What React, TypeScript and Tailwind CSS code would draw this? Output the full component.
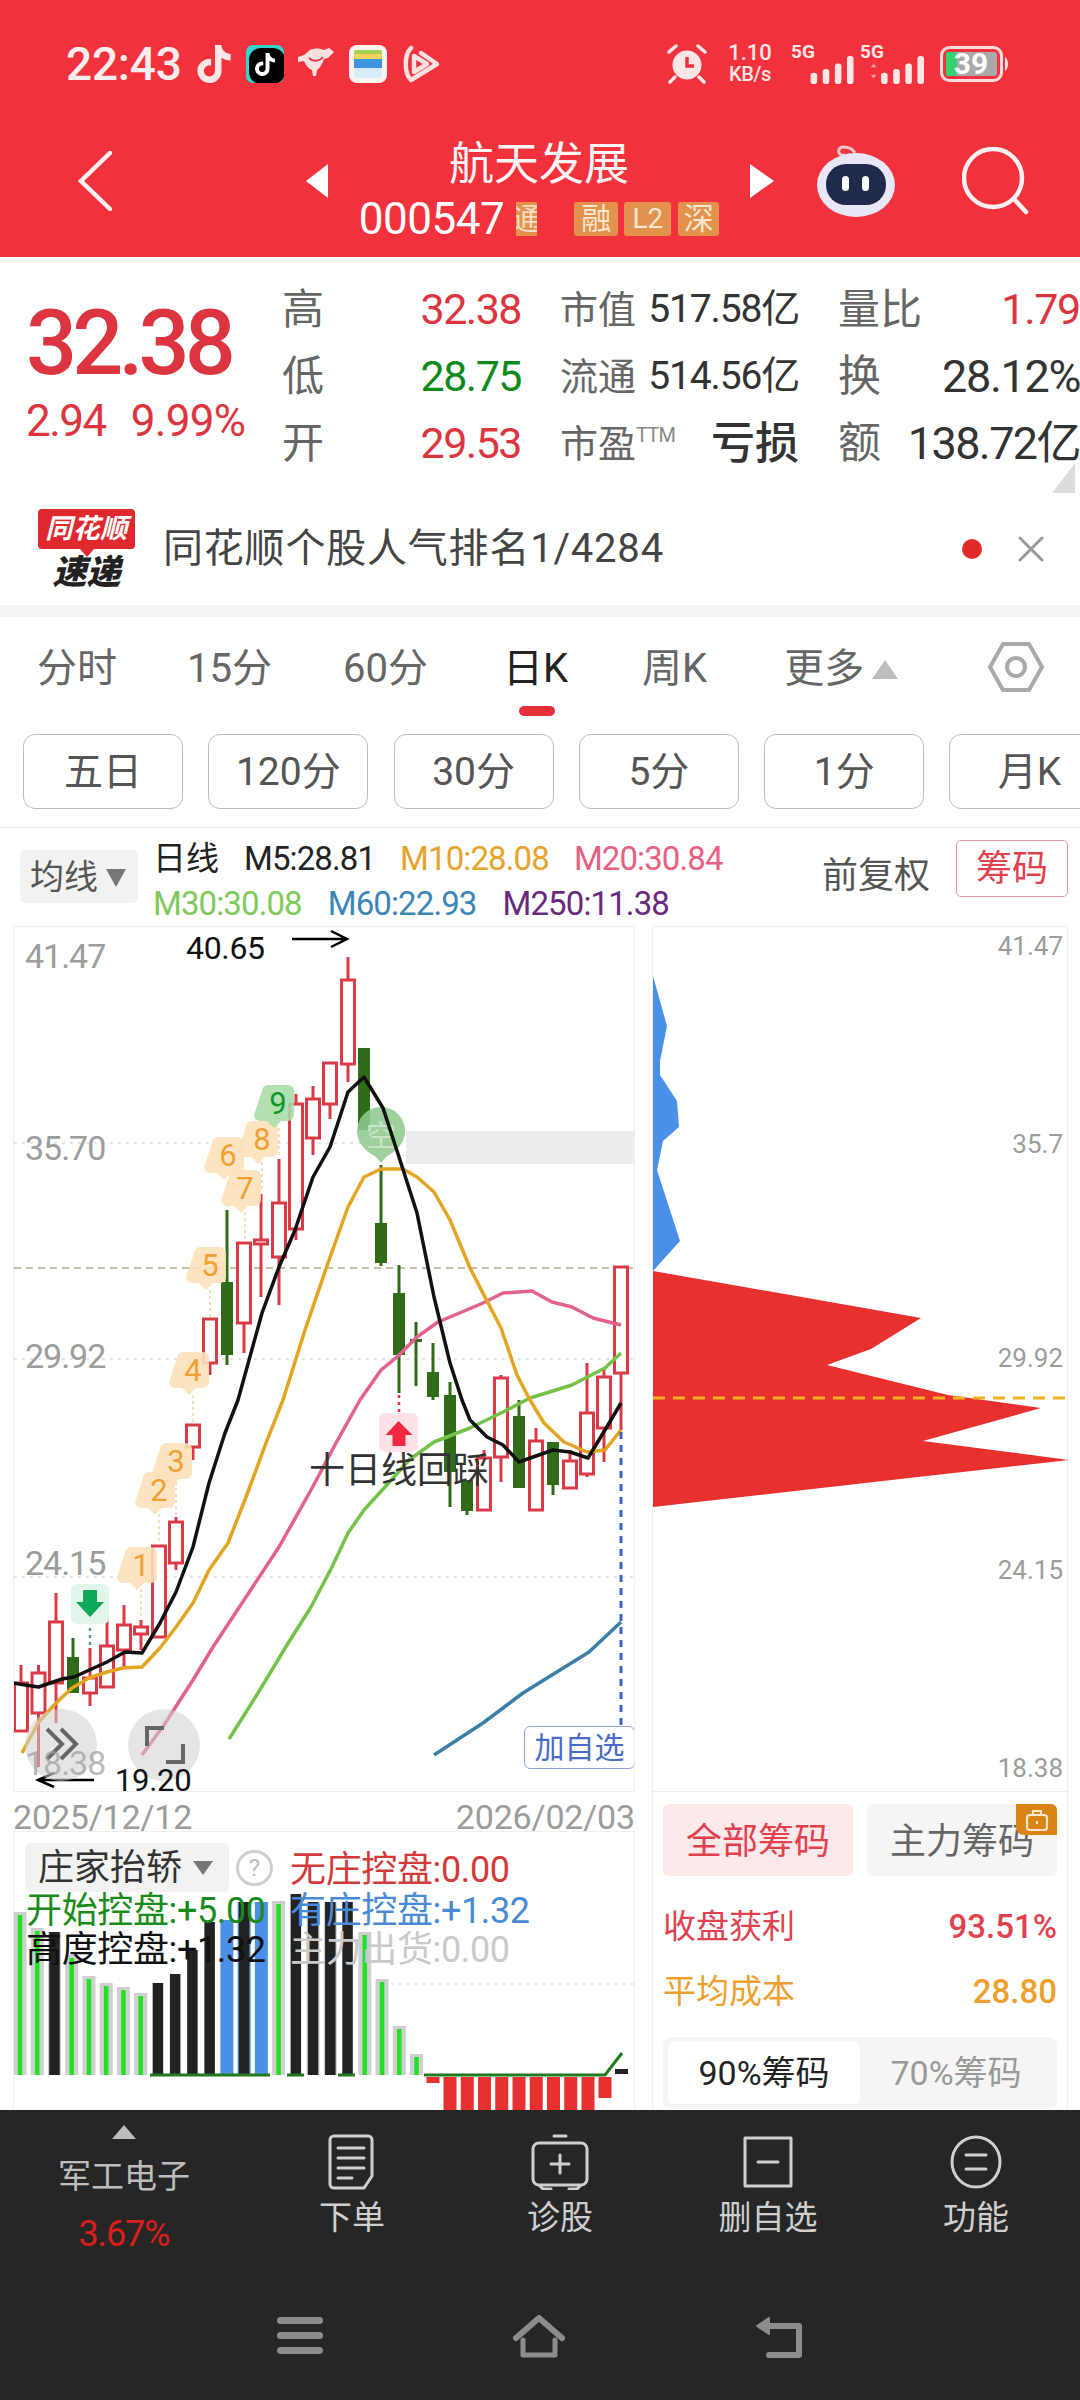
import React from "react";
import { FaTiktok } from "react-icons/fa6";

type C = [number, number, number, number, number, "r" | "g"];
const candles: C[] = [
  [20, 1683, 1731, 1665, 1731, "r"],
  [37.5, 1673, 1713, 1665, 1767, "r"],
  [55, 1622, 1683, 1593, 1723, "r"],
  [72, 1657, 1693, 1638, 1693, "g"],
  [89, 1678, 1693, 1648, 1706, "r"],
  [106, 1646, 1687, 1613, 1687, "r"],
  [123, 1625, 1650, 1605, 1668, "r"],
  [140, 1627, 1634, 1620, 1650, "r"],
  [158, 1546, 1637, 1546, 1637, "r"],
  [175, 1522, 1563, 1517, 1570, "r"],
  [192, 1425, 1447, 1425, 1460, "r"],
  [209, 1319, 1363, 1319, 1375, "r"],
  [226, 1282, 1355, 1210, 1365, "g"],
  [243, 1243, 1323, 1243, 1353, "r"],
  [260, 1240, 1244, 1194, 1297, "r"],
  [278, 1203, 1257, 1159, 1305, "r"],
  [295, 1104, 1229, 1094, 1240, "r"],
  [312, 1099, 1138, 1086, 1155, "r"],
  [329, 1063, 1104, 1063, 1119, "r"],
  [347, 980, 1064, 957, 1082, "r"],
  [363, 1048, 1130, 1048, 1130, "g"],
  [380, 1223, 1263, 1165, 1266, "g"],
  [398, 1293, 1355, 1265, 1393, "g"],
  [415, 1339, 1341, 1322, 1386, "g"],
  [432, 1372, 1397, 1343, 1400, "g"],
  [449, 1395, 1472, 1382, 1507, "g"],
  [466, 1480, 1511, 1480, 1515, "g"],
  [483, 1458, 1510, 1450, 1510, "r"],
  [500, 1378, 1457, 1375, 1482, "r"],
  [518, 1416, 1488, 1400, 1488, "g"],
  [535, 1441, 1510, 1428, 1510, "r"],
  [552, 1442, 1485, 1442, 1495, "g"],
  [569, 1461, 1488, 1450, 1488, "r"],
  [586, 1413, 1474, 1363, 1477, "r"],
  [603, 1377, 1428, 1368, 1462, "r"],
  [620, 1267, 1373, 1267, 1430, "r"],
];

const m5 = "12,1683 37.5,1687 61,1679 73,1677 106,1662 124,1652 141,1653 159,1623 175,1592 192,1547 208,1483 224,1433 237,1400 261,1313 278,1267 294,1230 312,1177 329,1147 347,1092 363,1077 382,1108 398,1157 416,1213 433,1297 449,1363 461,1400 469,1420 486,1437 502,1445 518,1462 535,1456 552,1450 569,1452 587,1458 604,1430 620,1403";
const m10 = "21,1753 37,1723 55,1703 71,1688 88,1678 106,1672 122,1668 141,1667 159,1648 175,1627 192,1603 208,1570 227,1543 245,1497 265,1443 282,1400 304,1330 327,1263 347,1207 363,1177 380,1169 402,1169 416,1177 433,1192 449,1220 469,1268 500,1328 516,1375 529,1400 543,1423 563,1442 586,1452 604,1450 620,1430";
const m20 = "141,1755 163,1725 192,1680 212,1647 245,1597 278,1547 310,1490 335,1443 359,1400 380,1370 396,1357 416,1337 437,1322 461,1312 482,1303 502,1293 531,1291 551,1302 571,1307 592,1318 620,1325";
const m30 = "228,1739 257,1693 286,1645 310,1607 331,1567 347,1533 363,1510 384,1487 408,1460 433,1442 469,1428 502,1412 529,1398 571,1385 604,1368 620,1353";
const m60 = "433,1755 482,1723 522,1693 588,1652 620,1622";

const badges: [number, number, string][] = [
  [192, 1352, "4"],
  [209, 1247, "5"],
  [227, 1137, "6"],
  [244, 1170, "7"],
  [261, 1121, "8"],
  [175, 1443, "3"],
  [158, 1472, "2"],
  [140, 1547, "1"],
];

const subBars: [string, number][] = [
  ["g", 1912], ["g", 1928], ["kg", 1932], ["g", 1955], ["g", 1976], ["g", 1983], ["g", 1987], ["g", 1993],
  ["k", 1983], ["k", 1974], ["k", 1950], ["k", 1922], ["b", 1920], ["kb", 1902], ["b", 1902], ["g", 1901],
  ["k", 1894], ["kg", 1902], ["kg", 1902], ["k", 1902], ["g", 1932], ["g", 1979], ["g", 2026], ["g", 2054],
];

function Badge({ cx, top, label, fill, color }: { cx: number; top: number; label: string; fill: string; color: string }) {
  return (
    <g>
      <path
        d={`M${cx - 16} ${top + 6}a6 6 0 0 1 6 -6h20a6 6 0 0 1 6 6v24a6 6 0 0 1 -6 6h-7l-7 7 -7 -7h-7a6 6 0 0 1 -6 -6z`}
        fill={fill}
        fillOpacity={0.88}
      />
      <text x={cx} y={top + 29} textAnchor="middle" fontSize={31} fill={color}>
        {label}
      </text>
    </g>
  );
}

function StatusBar() {
  return (
    <div className="flex items-center h-[42px] mt-[43px] pl-[66px] text-white">
      <span className="text-[46px] leading-[42px] tracking-[-0.005em] font-medium text-[#fdeeee]">22:43</span>
      <FaTiktok className="ml-[15px] w-[34px] h-[38px] text-[#fde6e6]" />
      <div className="relative ml-[15px] w-[38px] h-[38px] rounded-[7px] bg-[#35d5cf] overflow-hidden flex items-center justify-center">
        <div className="absolute left-[3px] top-[3px] w-[36px] h-[36px] rounded-[12px] bg-black" />
        <FaTiktok className="relative w-[20px] h-[23px] text-white" />
      </div>
      <svg className="ml-[13px]" width="38" height="36" viewBox="0 0 38 36" fill="#fde0e0">
        <path d="M1 11l6-2 6-5c4-2 10-2 14 0l5-2 5 4-6 6-4 1c-2 6-5 10-7 11l-1 6h-3l-1-6c-3-1-6-4-8-9l-6 1z" />
        <path d="M12 12c4 4 10 4 14-1" fill="none" stroke="#f1323d" strokeWidth="1.8" />
      </svg>
      <svg className="ml-[14px]" width="38" height="38" viewBox="0 0 38 38">
        <rect width="38" height="38" rx="8" fill="#fdf3f3" />
        <rect x="5" y="5" width="28" height="9" rx="2" fill="#a5cf55" />
        <rect x="5" y="9" width="28" height="5" fill="#efd25a" />
        <rect x="5" y="14" width="28" height="9" fill="#3f95e0" />
        <rect x="5" y="23" width="28" height="10" rx="2" fill="#d9ecfa" />
      </svg>
      <svg className="ml-[12px]" width="40" height="38" viewBox="0 0 40 38" fill="none" stroke="#fde0e0" strokeLinejoin="round" strokeLinecap="round">
        <path d="M12 3C5 10 5 28 12 35L38 19 22 8" strokeWidth="4.5" />
        <path d="M15 11v16l13-8z" strokeWidth="4.5" />
      </svg>
      <div className="ml-auto flex items-center pr-[68px]">
        <svg width="40" height="40" viewBox="0 0 40 40" fill="#fde6e6">
          <circle cx="20" cy="21" r="14.5" />
          <path d="M20 13v9h7" fill="none" stroke="#f1323d" strokeWidth="3.5" />
          <path d="M2 8l7-6M38 8l-7-6M8 33l-5 5M32 33l5 5" stroke="#fde6e6" strokeWidth="3.5" strokeLinecap="round" />
        </svg>
        <div className="ml-[20px] w-[46px] flex flex-col items-center text-[#fde6e6] font-medium">
          <span className="text-[22px] leading-[20px]">1.10</span>
          <span className="text-[20px] leading-[22px] tracking-[-0.02em]">KB/s</span>
        </div>
        <div className="ml-[18px] w-[66px] flex flex-col text-[#fde6e6]">
          <span className="text-[19px] leading-[16px] font-bold">5G</span>
          <svg className="mt-[-4px] self-end" width="48" height="28" viewBox="0 0 48 30" fill="#fde6e6">
            <rect x="0" y="18" width="7" height="12" rx="3" />
            <rect x="13" y="14" width="7" height="16" rx="3" />
            <rect x="26" y="8" width="7" height="22" rx="3" />
            <rect x="39" y="0" width="7" height="30" rx="3" />
          </svg>
        </div>
        <div className="ml-[3px] w-[66px] flex flex-col text-[#fde6e6]">
          <span className="text-[19px] leading-[16px] font-bold">5G</span>
          <svg className="mt-[-4px] self-end" width="60" height="28" viewBox="0 0 60 30" fill="#fde6e6">
            <path d="M3 12l3-4 3 4zM3 20h6l-3 4z" fill="#f9a0a0" />
            <rect x="14" y="18" width="7" height="12" rx="3" />
            <rect x="27" y="14" width="7" height="16" rx="3" />
            <rect x="40" y="8" width="7" height="22" rx="3" />
            <rect x="53" y="0" width="7" height="30" rx="3" />
          </svg>
        </div>
        <svg className="ml-[14px]" width="72" height="36" viewBox="0 0 72 36">
          <rect x="1.5" y="1.5" width="60" height="33" rx="8" fill="none" stroke="#fbdcdc" strokeWidth="3" />
          <rect x="6" y="6" width="51" height="24" rx="3" fill="#a9a9a9" />
          <rect x="6" y="6" width="11" height="24" rx="2" fill="#34d36f" />
          <path d="M65 11c4 2 4 12 0 14z" fill="#fbdcdc" />
          <text x="31" y="28" textAnchor="middle" fontSize="30" fontWeight="700" fill="#fff">39</text>
        </svg>
      </div>
    </div>
  );
}

function Header() {
  return (
    <header className="h-[257px] shrink-0 bg-[#f1323d] flex flex-col">
      <StatusBar />
      <div className="flex items-center mt-[50px] pl-[78px] h-[106px]">
        <svg className="mt-[-14px]" width="34" height="60" viewBox="0 0 34 60" fill="none" stroke="#fdf0f0" strokeWidth="4.5" strokeLinecap="round">
          <path d="M32 2L3 30l29 28" />
        </svg>
        <svg className="ml-[194px] mt-[-14px]" width="22" height="34" viewBox="0 0 22 34" fill="#fff"><path d="M22 0v34L0 17z" /></svg>
        <div className="w-[422px] flex flex-col items-center">
          <div className="text-[45px] leading-[52px] text-[#fff5f5]">航天发展</div>
          <div className="mt-[10px] flex items-center h-[36px]">
            <span className="text-[44px] leading-[36px] text-white tracking-[-0.01em]">000547</span>
            <span className="ml-[12px] w-[21px] h-[34px] bg-[#e2924c] text-[#f8dcc0] text-[30px] leading-[34px] overflow-hidden flex justify-center">通</span>
            <span className="ml-[37px] w-[44px] h-[34px] rounded-[3px] bg-[#e2924c] text-[#fbe6d0] text-[30px] leading-[34px] text-center">融</span>
            <span className="ml-[6px] w-[47px] h-[34px] rounded-[3px] bg-[#e2924c] text-[#fbe6d0] text-[28px] leading-[34px] text-center">L2</span>
            <span className="ml-[7px] w-[41px] h-[34px] rounded-[3px] bg-[#e2924c] text-[#fbe6d0] text-[30px] leading-[34px] text-center">深</span>
          </div>
        </div>
        <svg className="mt-[-14px]" width="24" height="34" viewBox="0 0 24 34" fill="#fff"><path d="M0 0v34l24-17z" /></svg>
        <svg className="ml-[41px] mt-[-14px]" width="82" height="76" viewBox="0 0 82 76">
          <path d="M30 12c-8 2-8-8-2-8s10 2 12 6" fill="none" stroke="#f3c5d0" strokeWidth="3" />
          <ellipse cx="41" cy="42" rx="39" ry="32" fill="#e9e6f7" />
          <rect x="11" y="21" width="60" height="41" rx="20" fill="#1f2a4d" />
          <rect x="27" y="33" width="7" height="15" rx="3.5" fill="#fff" />
          <rect x="47" y="33" width="7" height="15" rx="3.5" fill="#fff" />
        </svg>
        <svg className="ml-[65px] mt-[-14px]" width="68" height="68" viewBox="0 0 68 68" fill="none" stroke="#fdf0f0" strokeWidth="4.5" strokeLinecap="round">
          <circle cx="31" cy="31" r="29" />
          <path d="M52 52l12 13" />
        </svg>
      </div>
    </header>
  );
}

function QuoteCell({ label, value, color }: { label: string; value: string; color: string }) {
  return (
    <div className="flex items-center justify-between h-[67px]">
      <span className="text-[#666] text-[42px] leading-none">{label}</span>
      <span className={`text-[43px] leading-none tracking-[-0.035em] ${color}`}>{value}</span>
    </div>
  );
}

function Quote() {
  return (
    <section className="relative h-[236px] shrink-0 bg-white flex">
      <div className="w-[283px] pt-[42px] pl-[26px] text-[#dc3540]">
        <div className="text-[90px] leading-[90px] tracking-[-0.055em] font-medium">32.38</div>
        <div className="flex mt-[10px] text-[44px] leading-[44px] tracking-[-0.035em]">
          <span>2.94</span>
          <span className="ml-[25px] tracking-[-0.015em]">9.99%</span>
        </div>
      </div>
      <div className="pt-[19px] grid grid-cols-[239px_239px_242px] gap-x-[39px] h-[220px]">
        <QuoteCell label="高" value="32.38" color="text-[#dc3540]" />
        <div className="flex items-center justify-between h-[67px]">
          <span className="text-[#666] text-[38px] leading-none">市值</span>
          <span className="text-[39px] leading-none tracking-[-0.03em] text-[#333]">517.58亿</span>
        </div>
        <div className="flex items-center justify-between h-[67px]">
          <span className="text-[#666] text-[42px] leading-none">量比</span>
          <span className="text-[43px] leading-none tracking-[-0.03em] text-[#dc3540]">1.79</span>
        </div>
        <QuoteCell label="低" value="28.75" color="text-[#0e8a1c]" />
        <div className="flex items-center justify-between h-[67px]">
          <span className="text-[#666] text-[38px] leading-none">流通</span>
          <span className="text-[39px] leading-none tracking-[-0.03em] text-[#333]">514.56亿</span>
        </div>
        <div className="flex items-center justify-between h-[67px]">
          <span className="text-[#666] text-[43px] leading-none">换</span>
          <span className="text-[45px] leading-none tracking-[-0.03em] text-[#333]">28.12%</span>
        </div>
        <QuoteCell label="开" value="29.53" color="text-[#dc3540]" />
        <div className="flex items-center justify-between h-[67px]">
          <span className="flex items-start text-[#666] text-[38px] leading-none">
            市盈<span className="text-[20px] leading-[20px] text-[#888] tracking-[-0.04em]">TTM</span>
          </span>
          <span className="text-[44px] leading-none font-medium text-[#333]">亏损</span>
        </div>
        <div className="flex items-center justify-between h-[67px]">
          <span className="text-[#666] text-[43px] leading-none">额</span>
          <span className="text-[45px] leading-none tracking-[-0.035em] text-[#333]">138.72亿</span>
        </div>
      </div>
      <svg className="absolute right-[5px] bottom-[0px]" width="23" height="30" viewBox="0 0 23 30" fill="#dcdcdc"><path d="M23 0v30H0z" /></svg>
    </section>
  );
}

function Banner() {
  return (
    <section className="h-[112px] shrink-0 bg-white flex items-center">
      <div className="ml-[38px] w-[97px] h-[80px] flex flex-col items-center">
        <div className="relative w-[97px] h-[40px] rounded-[4px] bg-[#e0282f] text-white text-[27px] leading-[40px] font-bold italic tracking-[0.02em] text-center">
          同花顺
          <div className="absolute left-[42px] bottom-[-8px] w-0 h-0 border-x-[7px] border-x-transparent border-t-[8px] border-t-[#e0282f]" />
        </div>
        <div className="mt-[6px] text-[34px] leading-[34px] font-black italic text-[#222]">速递</div>
      </div>
      <div className="ml-[28px] text-[40px] leading-none text-[#444] tracking-[0.02em]">同花顺个股人气排名1/4284</div>
      <div className="ml-auto w-[20px] h-[20px] rounded-full bg-[#e32a2a]" />
      <svg className="ml-[36px] mr-[36px]" width="26" height="26" viewBox="0 0 26 26" stroke="#999" strokeWidth="3" strokeLinecap="round"><path d="M2 2l22 22M24 2L2 24" /></svg>
    </section>
  );
}

function Tabs() {
  return (
    <section className="h-[117px] shrink-0 bg-white relative flex items-start pl-[37px] pt-[30px]">
      <div className="flex items-center text-[40px] leading-[44px] text-[#666]">
        <span>分时</span>
        <span className="ml-[70px]">15分</span>
        <span className="ml-[71px]">60分</span>
        <span className="ml-[75px] text-[#222]">日K</span>
        <span className="ml-[74px]">周K</span>
        <span className="ml-[77px] flex items-center">
          更多
          <svg className="ml-[8px]" width="26" height="19" viewBox="0 0 26 19" fill="#bdbdbd"><path d="M13 0l13 19H0z" /></svg>
        </span>
      </div>
      <svg className="absolute left-[988px] top-[24px]" width="56" height="52" viewBox="0 0 56 52" fill="none" stroke="#a9a9a9" strokeWidth="4">
        <path d="M15 3h26l13 23-13 23H15L2 26z" strokeLinejoin="round" />
        <circle cx="28" cy="26" r="9" />
      </svg>
      <div className="absolute left-[519px] top-[89px] w-[36px] h-[10px] rounded-full bg-[#e5303a]" />
    </section>
  );
}

function Periods() {
  const items = ["五日", "120分", "30分", "5分", "1分", "月K"];
  return (
    <section className="h-[94px] shrink-0 bg-white border-b border-[#e6e6e6] pl-[23px] flex gap-[25.3px] overflow-hidden">
      {items.map((t) => (
        <div key={t} className="w-[160px] h-[75px] shrink-0 rounded-[12px] border border-[#bcbcbc] pt-[2px] flex items-center justify-center text-[39px] text-[#555]">
          {t}
        </div>
      ))}
    </section>
  );
}

function Legend() {
  return (
    <section className="h-[98px] shrink-0 bg-white flex pl-[20px] relative">
      <div className="mt-[22px] w-[118px] h-[53px] rounded-[5px] bg-[#f2f2f2] flex items-center pl-[10px] pt-[2px] text-[34px] text-[#555]">
        均线
        <svg className="ml-[8px]" width="20" height="18" viewBox="0 0 20 18" fill="#777"><path d="M0 0h20L10 18z" /></svg>
      </div>
      <div className="ml-[15px] flex flex-col pt-[8px] text-[33px] tracking-[-0.027em] leading-[45px]">
        <div className="flex gap-[25px]">
          <span className="text-[#222] tracking-normal">日线</span>
          <span className="text-[#222]">M5:28.81</span>
          <span className="text-[#e6a32a]">M10:28.08</span>
          <span className="text-[#e8607f]">M20:30.84</span>
        </div>
        <div className="flex gap-[26px]">
          <span className="text-[#7fca5a]">M30:30.08</span>
          <span className="text-[#3b86b5]">M60:22.93</span>
          <span className="text-[#6a2a7c]">M250:11.38</span>
        </div>
      </div>
      <div className="ml-auto mr-[12px] flex items-start pt-[12px]">
        <span className="mt-[14px] text-[36px] leading-[44px] text-[#555]">前复权</span>
        <span className="ml-[26px] w-[112px] h-[57px] rounded-[5px] border border-[#d99a9f] flex items-center justify-center text-[36px] text-[#e0414e]">筹码</span>
      </div>
    </section>
  );
}

function MainChart() {
  const axis = [
    ["41.47", 9],
    ["35.70", 201],
    ["29.92", 409],
    ["24.15", 616],
  ] as const;
  return (
    <div className="relative w-[622px] h-[866px] border border-[#eeeeee] overflow-hidden">
      <svg className="block absolute left-0 top-0" width="622" height="866" viewBox="13 927 622 866">
        <path d="M13 1143H635M13 1359H635M13 1577H635" stroke="#dddddd" strokeWidth="1.5" strokeDasharray="3 5" />
        <rect x="405" y="1131" width="230" height="33" fill="#ececec" />
        <path d="M13 1268H635" stroke="#b7a98c" strokeWidth="1.5" strokeDasharray="7 5" />
        <path d="M227 1180v30M244 1212v30M261 1162v30M278 1128v30M209 1290v30M192 1395v30M175 1482v40M158 1514v30M140 1589v30" stroke="#e8d8a8" strokeWidth="1.5" strokeDasharray="3 3" />
        <path d="M89 1628v22" stroke="#4aa89a" strokeWidth="2.5" strokeDasharray="3 4" />
        <path d="M398 1395v18" stroke="#e0304a" strokeWidth="2.5" strokeDasharray="3 4" />
        {candles.map(([x, top, bot, wt, wb, k], i) =>
          k === "r" ? (
            <g key={i} stroke="#d93a46" strokeWidth="3">
              {wt < top && <path d={`M${x} ${wt}V${top}`} />}
              {wb > bot && <path d={`M${x} ${bot}V${wb}`} />}
              <rect x={x - 6.5} y={top} width="13" height={bot - top} fill="#fff" />
            </g>
          ) : (
            <g key={i} fill="#2f6b18" stroke="#2f6b18">
              <path d={`M${x} ${wt}V${wb}`} strokeWidth="3" />
              <rect x={x - 6} y={top} width="12" height={Math.max(bot - top, 3)} stroke="none" />
            </g>
          )
        )}
        {badges.map(([x, t, l]) => (
          <Badge key={l} cx={x} top={t} label={l} fill="#fde0b8" color="#f0a032" />
        ))}
        <Badge cx={277} top={1085} label="9" fill="#a9dca9" color="#0a9a2c" />
        <path d="M380 1107a24 24 0 0 1 24 24c0 14-12 22-18 25l-6 7 -6 -7c-6-3-18-11-18-25a24 24 0 0 1 24 -24z" fill="#8fc98f" fillOpacity="0.88" />
        <text x="380" y="1146" textAnchor="middle" fontSize="30" fill="#c6e6c6">空</text>
        <rect x="70" y="1584" width="38" height="40" rx="6" fill="#e2f5ea" />
        <path d="M82 1590h14v12h7l-14 15 -14 -15h7z" fill="#0ea858" />
        <rect x="378" y="1413" width="39" height="39" rx="6" fill="#fde3e7" />
        <path d="M397.5 1421l14 14h-7v11h-13v-11h-7z" fill="#f5263f" />
        <g fill="none" strokeLinejoin="round" strokeWidth="3.5">
          <polyline points={m60} stroke="#3b7fa8" />
          <polyline points={m30} stroke="#74c24a" />
          <polyline points={m20} stroke="#e2628a" />
          <polyline points={m10} stroke="#e3a521" />
          <polyline points={m5} stroke="#111111" />
        </g>
        <path d="M620 1432V1726" stroke="#3b62c4" strokeWidth="3" strokeDasharray="7 6" />
        <g stroke="#000" strokeWidth="2.5" fill="none">
          <path d="M291 939H346M330 931l16 8 -16 8" />
          <path d="M37 1780H93M53 1773l-16 7 16 7" />
        </g>
        <circle cx="60" cy="1745" r="36" fill="#cfcfcf" fillOpacity="0.55" />
        <circle cx="163" cy="1745" r="36" fill="#cfcfcf" fillOpacity="0.55" />
        <path d="M46 1729l15 15 -15 15M60 1729l15 15 -15 15" fill="none" stroke="#666" strokeWidth="4" />
        <path d="M146 1746v-18h17M182 1744v18h-17" fill="none" stroke="#666" strokeWidth="4" />
      </svg>
      {axis.map(([t, top]) => (
        <span key={t} className="absolute left-[11px] text-[34px] leading-[40px] tracking-[-0.03em] text-[#9c9c9c]" style={{ top }}>
          {t}
        </span>
      ))}
      <span className="absolute left-[11px] top-[816px] text-[34px] leading-[40px] tracking-[-0.03em] text-[#9c9c9c]/70">18.38</span>
      <span className="absolute left-[172px] top-[3px] text-[32px] leading-[36px] text-[#111] tracking-[-0.01em]">40.65</span>
      <span className="absolute left-[101px] top-[826px] text-[31px] leading-[36px] text-[#111] tracking-[-0.01em] translate-y-[10px]">19.20</span>
      <span className="absolute left-[295px] top-[522px] text-[36px] leading-[44px] text-[#333]">十日线回踩</span>
      <span className="absolute left-[510px] top-[799px] w-[111px] h-[43px] rounded-[6px] border border-[#8fa6dc] bg-white flex items-center justify-center text-[30px] text-[#4a6bc8]">加自选</span>
    </div>
  );
}

function SubChart() {
  return (
    <div className="relative flex-1 border-x border-t border-[#eeeeee] overflow-hidden">
      <svg className="block absolute left-0 top-0" width="622" height="281" viewBox="13 1832 622 281">
        <path d="M390 1984H635" stroke="#e3e3e3" strokeWidth="1.5" strokeDasharray="3 5" />
        {subBars.map(([k, top], i) => {
          const x = 19 + 17.24 * i;
          const h = 2075 - top;
          return (
            <g key={i}>
              {(k === "g" || k === "kg") && <rect x={x - 6.5} y={top} width="13" height={h} fill="#cfcfcf" />}
              {k === "g" && <rect x={x - 2.25} y={top + 3} width="4.5" height={h - 3} fill="#22e022" />}
              {(k === "b" || k === "kb") && <rect x={x - 6.5} y={top} width="13" height={h} fill="#4a90e8" />}
              {(k === "k" || k === "kg" || k === "kb") && <rect x={x - 5.25} y={top} width="10.5" height={h} fill="#222222" />}
            </g>
          );
        })}
        <path d="M149 2075H269M286 2075H303M337 2075H354" stroke="#1f7a1f" strokeWidth="3" />
        <rect x="425.5" y="2077" width="13" height="6" fill="#e8302f" />
        {[0, 1, 2, 3, 4, 5, 6, 7, 8].map((i) => (
          <rect key={i} x={442.5 + 17.25 * i} y="2077" width="13" height="40" fill="#e8302f" />
        ))}
        <rect x="597.5" y="2077" width="13" height="21" fill="#e8302f" />
        <path d="M423 2075H604L621 2053" fill="none" stroke="#1f7a1f" strokeWidth="3" />
        <rect x="614" y="2069" width="13" height="5" fill="#222222" />
      </svg>
      <div className="absolute left-[11px] top-[11px] w-[204px] h-[49px] rounded-[5px] bg-[#f2f2f2] flex items-center pl-[13px] text-[36px] text-[#333]">
        庄家抬轿
        <svg className="ml-[11px]" width="20" height="14" viewBox="0 0 20 14" fill="#777"><path d="M0 0h20L10 14z" /></svg>
      </div>
      <div className="absolute left-[222px] top-[18px] w-[37px] h-[36px] rounded-full border-[3px] border-[#cfcfcf] flex items-center justify-center text-[24px] text-[#bcbcbc]">?</div>
      <span className="absolute left-[276px] top-[16px] text-[36px] leading-[44px] tracking-[-0.01em] text-[#d23a3a]">无庄控盘:0.00</span>
      <span className="absolute left-[12px] top-[57px] text-[36px] leading-[44px] tracking-[-0.01em] text-[#1a8a1a]">开始控盘:+5.00</span>
      <span className="absolute left-[276px] top-[57px] text-[36px] leading-[44px] tracking-[-0.01em] text-[#4a8ad4]">有庄控盘:+1.32</span>
      <span className="absolute left-[12px] top-[96px] text-[36px] leading-[44px] tracking-[-0.01em] text-[#111]">高度控盘:+1.32</span>
      <span className="absolute left-[276px] top-[96px] text-[36px] leading-[44px] tracking-[-0.01em] text-[#c9c9c9]">主力出货:0.00</span>
    </div>
  );
}

function LeftColumn() {
  return (
    <div className="w-[622px] flex flex-col">
      <MainChart />
      <div className="h-[39px] pt-[7px] flex justify-between text-[34px] leading-[36px] text-[#9c9c9c] tracking-[-0.005em]">
        <span>2025/12/12</span>
        <span>2026/02/03</span>
      </div>
      <SubChart />
    </div>
  );
}

function RightColumn() {
  const axis = [
    ["41.47", 4],
    ["35.7", 202],
    ["29.92", 416],
    ["24.15", 628],
    ["18.38", 826],
  ] as const;
  return (
    <div className="ml-[17px] w-[416px] flex flex-col border-x border-[#eeeeee]">
      <div className="relative h-[866px] border-y border-[#eeeeee]">
        <svg className="block absolute left-0 top-0" width="416" height="866" viewBox="652 927 416 866">
          <polygon points="652,976 666,1026 659,1061 659,1075 676,1101 678,1127 662,1141 656,1170 679,1241 652,1271" fill="#4a90e8" />
          <polygon points="652,1271 920,1318 870,1349 826,1365 947,1395 1040,1408 922,1441 1068,1460 917,1477 652,1507" fill="#e8302f" />
          <path d="M652 1398H1064" stroke="#f0b020" strokeWidth="3" strokeDasharray="12 8" />
        </svg>
        {axis.map(([t, top]) => (
          <span key={t} className="absolute right-[4px] text-[26px] leading-[30px] text-[#9c9c9c]" style={{ top }}>
            {t}
          </span>
        ))}
      </div>
      <div className="flex-1 px-[10px] pt-[12px] flex flex-col overflow-hidden">
        <div className="flex justify-between">
          <div className="w-[190px] h-[72px] rounded-[6px] bg-[#fde8ea] pt-[3px] flex items-center justify-center text-[36px] text-[#e0414e]">全部筹码</div>
          <div className="relative w-[190px] h-[72px] rounded-[6px] bg-[#f5f5f5] pt-[3px] flex items-center justify-center text-[36px] text-[#666]">
            主力筹码
            <div className="absolute right-0 top-0 w-[41px] h-[31px] rounded-tr-[6px] rounded-bl-[8px] bg-[#d98414] flex items-center justify-center">
              <svg width="24" height="24" viewBox="0 0 24 24" fill="none" stroke="#fde7c8" strokeWidth="2.2">
                <rect x="2" y="7" width="20" height="15" rx="3" />
                <path d="M8 7V3h8v4M12 13v3" />
              </svg>
            </div>
          </div>
        </div>
        <div className="mt-[18px] h-[65px] flex items-center justify-between text-[33px] text-[#e0414e]">
          <span>收盘获利</span>
          <span className="font-medium">93.51%</span>
        </div>
        <div className="h-[65px] flex items-center justify-between text-[33px] text-[#ef9f2e]">
          <span>平均成本</span>
          <span className="font-medium">28.80</span>
        </div>
        <div className="mt-[13px] h-[72px] shrink-0 rounded-[8px] bg-[#f5f5f5] p-[5px] flex text-[34px]">
          <div className="w-[192px] rounded-[6px] bg-white flex items-center justify-center text-[#222]">90%筹码</div>
          <div className="flex-1 flex items-center justify-center text-[#999]">70%筹码</div>
        </div>
      </div>
    </div>
  );
}

function Action({ label, children }: { label: string; children: React.ReactNode }) {
  return (
    <div className="w-[208px] flex flex-col items-center pt-[24px]">
      <svg width="60" height="56" viewBox="0 0 60 56" fill="none" stroke="#cfcfcf" strokeWidth="3" strokeLinecap="round" strokeLinejoin="round">
        {children}
      </svg>
      <span className="mt-[9px] text-[33px] leading-[38px] text-[#cfcfcf]">{label}</span>
    </div>
  );
}

function Bottom() {
  return (
    <footer className="flex-1 bg-[#262626] flex flex-col">
      <div className="flex h-[180px]">
        <div className="w-[248px] flex flex-col items-center pt-[15px]">
          <svg width="24" height="14" viewBox="0 0 24 14" fill="#bdbdbd"><path d="M12 0l12 14H0z" /></svg>
          <span className="mt-[19px] text-[33px] leading-[38px] text-[#bdbdbd]">军工电子</span>
          <span className="mt-[18px] text-[36px] leading-[40px] tracking-[-0.03em] text-[#d81e1e]">3.67%</span>
        </div>
        <Action label="下单">
          <path d="M8 6a4 4 0 0 1 4-4h34a4 4 0 0 1 4 4v36l-8 12H12a4 4 0 0 1-4-4z" />
          <path d="M16 14h26M16 24h26M16 34h26M16 44h14" />
        </Action>
        <Action label="诊股">
          <path d="M24 2h12" />
          <rect x="3" y="9" width="54" height="42" rx="6" />
          <path d="M30 21v18M21 30h18M10 52l3 3h8M50 52l-3 3h-8" />
        </Action>
        <Action label="删自选">
          <rect x="7" y="4" width="46" height="48" />
          <path d="M20 28h20" />
        </Action>
        <Action label="功能">
          <ellipse cx="30" cy="28" rx="24" ry="25" />
          <path d="M20 21h20M20 35h20" />
        </Action>
      </div>
      <div className="flex-1 flex justify-center items-start gap-[190px] pt-[25px] pl-[1px]">
        <svg width="46" height="42" viewBox="0 0 46 42" fill="#8c8c8c">
          <rect y="2" width="46" height="7" rx="3.5" />
          <rect y="17" width="46" height="7" rx="3.5" />
          <rect y="32" width="46" height="7" rx="3.5" />
        </svg>
        <svg width="52" height="44" viewBox="0 0 52 44" fill="none" stroke="#8c8c8c" strokeWidth="6" strokeLinecap="round" strokeLinejoin="round">
          <path d="M3 23L26 3l23 20" />
          <path d="M10 25v15h32V25" strokeWidth="5" />
        </svg>
        <svg width="50" height="44" viewBox="0 0 50 44" fill="none" stroke="#8c8c8c" strokeWidth="6" strokeLinecap="round" strokeLinejoin="round">
          <path d="M6 11h38v29H14" />
          <path d="M2 11L14 3v16z" fill="#8c8c8c" strokeWidth="2" />
        </svg>
      </div>
    </footer>
  );
}

export default function App() {
  return (
    <div className="w-[1080px] h-[2400px] flex flex-col overflow-hidden bg-white font-['Roboto','Noto_Sans_CJK_SC',sans-serif]">
      <Header />
      <Quote />
      <Banner />
      <div className="h-[12px] shrink-0 bg-[#f5f5f5]" />
      <Tabs />
      <Periods />
      <Legend />
      <main className="h-[1184px] shrink-0 flex pl-[13px] overflow-hidden">
        <LeftColumn />
        <RightColumn />
      </main>
      <Bottom />
    </div>
  );
}
